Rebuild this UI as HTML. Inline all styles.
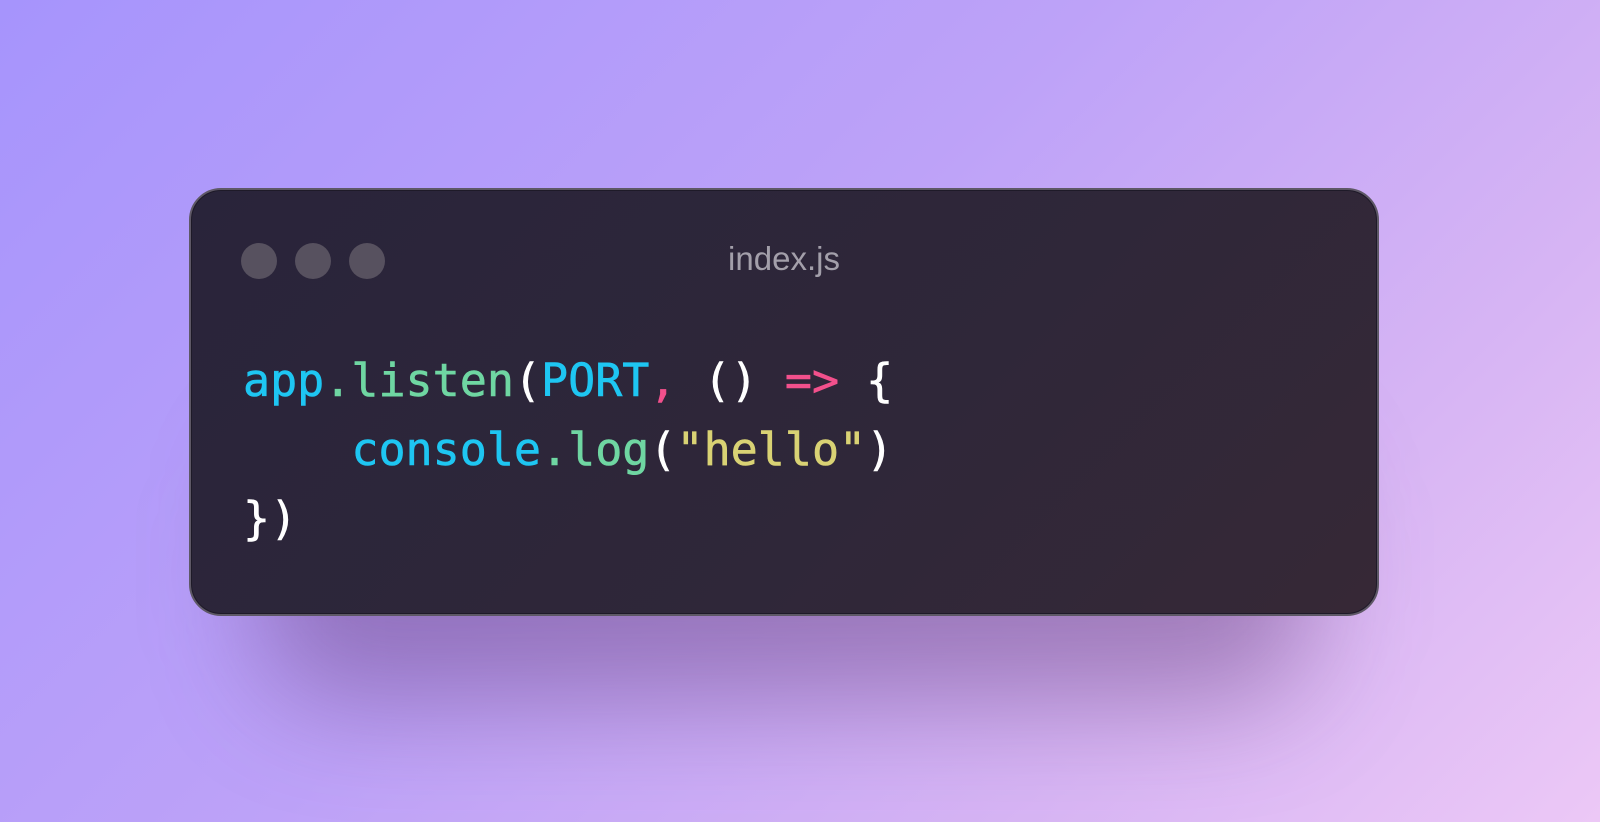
<!DOCTYPE html>
<html><head><style>
html,body{margin:0;padding:0;}
body{width:1600px;height:822px;overflow:hidden;position:relative;
background:linear-gradient(135deg,#a694fc 0%,#bda2f8 45%,#d6b4f4 75%,#ecc8f6 100%);}
.shadow{position:absolute;left:260px;top:440px;width:1050px;height:260px;border-radius:80px;background:rgba(90,50,110,0.42);filter:blur(55px);}
.win{position:absolute;left:189px;top:188px;width:1186px;height:424px;border-radius:32px;
border:2px solid #5e5866;background:linear-gradient(135deg,#29243a 0%,#2f2739 60%,#362836 100%);
box-shadow:inset 0 0 0 1px #1e1a28;}
.dot{position:absolute;top:53px;width:36px;height:36px;border-radius:50%;background:#57515f;}
.title{position:absolute;top:50px;left:0;width:1186px;text-align:center;font-family:"Liberation Sans",sans-serif;font-size:33px;color:#a39faa;}
pre{position:absolute;left:52px;top:156px;margin:0;font-family:"DejaVu Sans Mono",monospace;font-size:45px;line-height:69px;color:#fff;font-weight:normal;-webkit-text-stroke:0.6px currentColor;}
.c{color:#1ec6f2}.g{color:#6fd6a2}.p{color:#f2508c}.y{color:#d9d274}
</style></head><body>
<div class="shadow"></div>
<div class="win">
<div class="dot" style="left:50px"></div>
<div class="dot" style="left:104px"></div>
<div class="dot" style="left:158px"></div>
<div class="title">index.js</div>
<pre><span class="c">app</span><span class="g">.listen</span>(<span class="c">PORT</span><span class="p">,</span> () <span class="p">=&gt;</span> {
    <span class="c">console</span><span class="g">.log</span>(<span class="y">"hello"</span>)
})</pre>
</div>
</body></html>
